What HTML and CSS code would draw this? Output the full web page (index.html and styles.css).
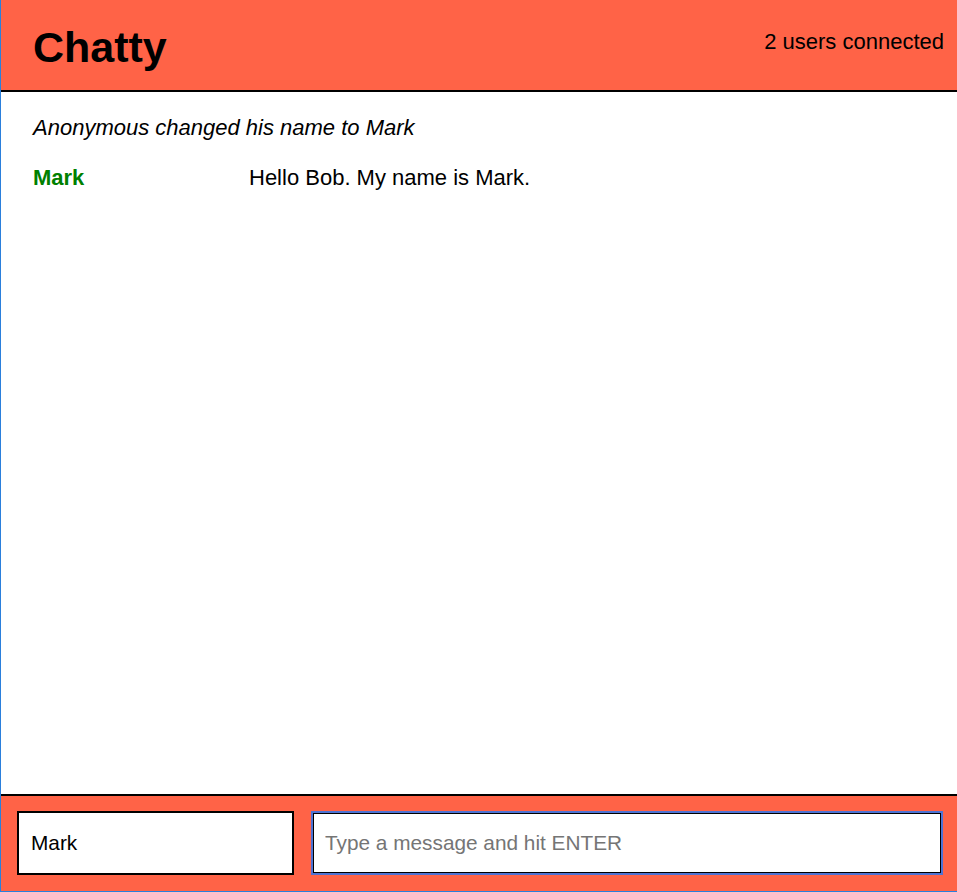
FILE: index.html
```html
<!DOCTYPE html>
<html lang="en">
<head>
<meta charset="utf-8">
<title>Chatty</title>
<link rel="stylesheet" href="styles.css">
</head>
<body>
<div class="app">
  <header class="header">
    <h1 class="title">Chatty</h1>
    <span class="users">2 users connected</span>
  </header>
  <main class="messages">
    <div class="notice">Anonymous changed his name to Mark</div>
    <div class="message">
      <span class="author">Mark</span>
      <span class="text">Hello Bob. My name is Mark.</span>
    </div>
  </main>
  <footer class="footer">
    <input class="name-input" type="text" value="Mark">
    <input class="msg-input" type="text" placeholder="Type a message and hit ENTER" autofocus>
  </footer>
</div>
</body>
</html>
```

FILE: styles.css
```css
html, body {
  margin: 0;
  padding: 0;
}

body {
  font-family: "Liberation Sans", Arial, sans-serif;
  color: #000;
  background: #fff;
}

.app {
  box-sizing: border-box;
  height: 892px;
  display: flex;
  flex-direction: column;
  border-left: 1px solid #2a7fdc;
  border-bottom: 1px solid #2a7fdc;
}

.header {
  box-sizing: border-box;
  height: 92px;
  flex: none;
  display: flex;
  justify-content: space-between;
  align-items: flex-start;
  padding: 23px 13px 0 32px;
  background: #ff6347;
  border-bottom: 2px solid #000;
}

.title {
  margin: 0;
  font-size: 43px;
  font-weight: bold;
  line-height: normal;
}

.users {
  margin-top: 6px;
  font-size: 22px;
  line-height: normal;
}

.messages {
  flex: 1;
  display: flex;
  flex-direction: column;
  gap: 24px;
  padding: 23px 32px;
  font-size: 22px;
  line-height: normal;
  overflow: hidden;
}

.notice {
  font-style: italic;
}

.message {
  display: grid;
  grid-template-columns: 216px 1fr;
}

.author {
  color: #008000;
  font-weight: bold;
}

.footer {
  box-sizing: border-box;
  flex: none;
  height: 97px;
  display: flex;
  gap: 17px;
  padding: 15px 14px 16px 16px;
  background: #ff6347;
  border-top: 2px solid #000;
}

.name-input,
.msg-input {
  box-sizing: border-box;
  height: 64px;
  min-width: 0;
  margin: 0;
  padding: 0 12px;
  font-family: "Liberation Sans", Arial, sans-serif;
  font-size: 20.8px;
  color: #000;
  background: #fff;
  border-radius: 0;
}

.name-input {
  flex: none;
  width: 277px;
  border: 2px solid #000;
}

.msg-input {
  flex: 1;
  border: 2px solid #4f73d3;
  box-shadow: inset 0 0 0 1px #000;
  outline: none;
  caret-color: #000;
}

.msg-input::placeholder {
  color: #757575;
}

.name-input:focus,
.msg-input:focus {
  outline: none;
}
```
